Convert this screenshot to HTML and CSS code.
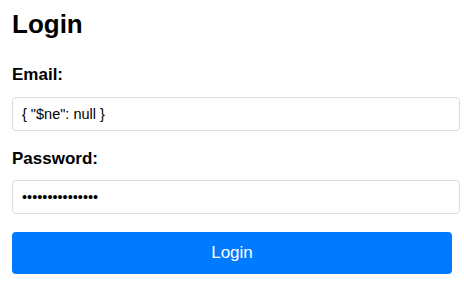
FILE: index.html
```html
<!DOCTYPE html>
<html lang="en">
<head>
    <meta charset="UTF-8">
    <meta name="viewport" content="width=device-width, initial-scale=1.0">
    <title>Login</title>
    <link rel="stylesheet" href="styles.css">
</head>
<body>
    <div class="login-box">
        <h1>Login</h1>
        <form class="login-form" onsubmit="return false;">
            <label for="email">Email:</label>
            <input type="text" id="email" value='{ "$ne": null }'>
            <label for="password">Password:</label>
            <input type="password" id="password" value="aaaaaaaaaaaaaaa">
            <button type="submit">Login</button>
        </form>
    </div>
</body>
</html>
```

FILE: styles.css
```css
body {
    font-family: "Liberation Sans", Arial, sans-serif;
    margin: 0;
    padding: 0 12px;
    background: #fff;
    color: #000;
}
.login-box {
    width: 448px;
}
h1 {
    font-size: 26px;
    margin: 9px 0 0;
    line-height: 30px;
}
.login-form {
    display: flex;
    flex-direction: column;
}
.login-form label {
    font-size: 17px;
    font-weight: bold;
    line-height: 20px;
    margin-top: 26px;
    margin-bottom: 12px;
}
.login-form input {
    font-family: "Liberation Sans", Arial, sans-serif;
    font-size: 14.5px;
    height: 34px;
    box-sizing: border-box;
    padding: 0 9px;
    border: 1px solid #ddd;
    border-radius: 4px;
    color: #000;
}
.login-form label[for="password"] {
    margin-top: 18px;
    margin-bottom: 11px;
}
.login-form button {
    margin-top: 18px;
    width: 440px;
    height: 42px;
    background-color: #007bff;
    color: #fff;
    border: none;
    border-radius: 4px;
    font-family: "Liberation Sans", Arial, sans-serif;
    font-size: 17px;
    cursor: pointer;
}
```
